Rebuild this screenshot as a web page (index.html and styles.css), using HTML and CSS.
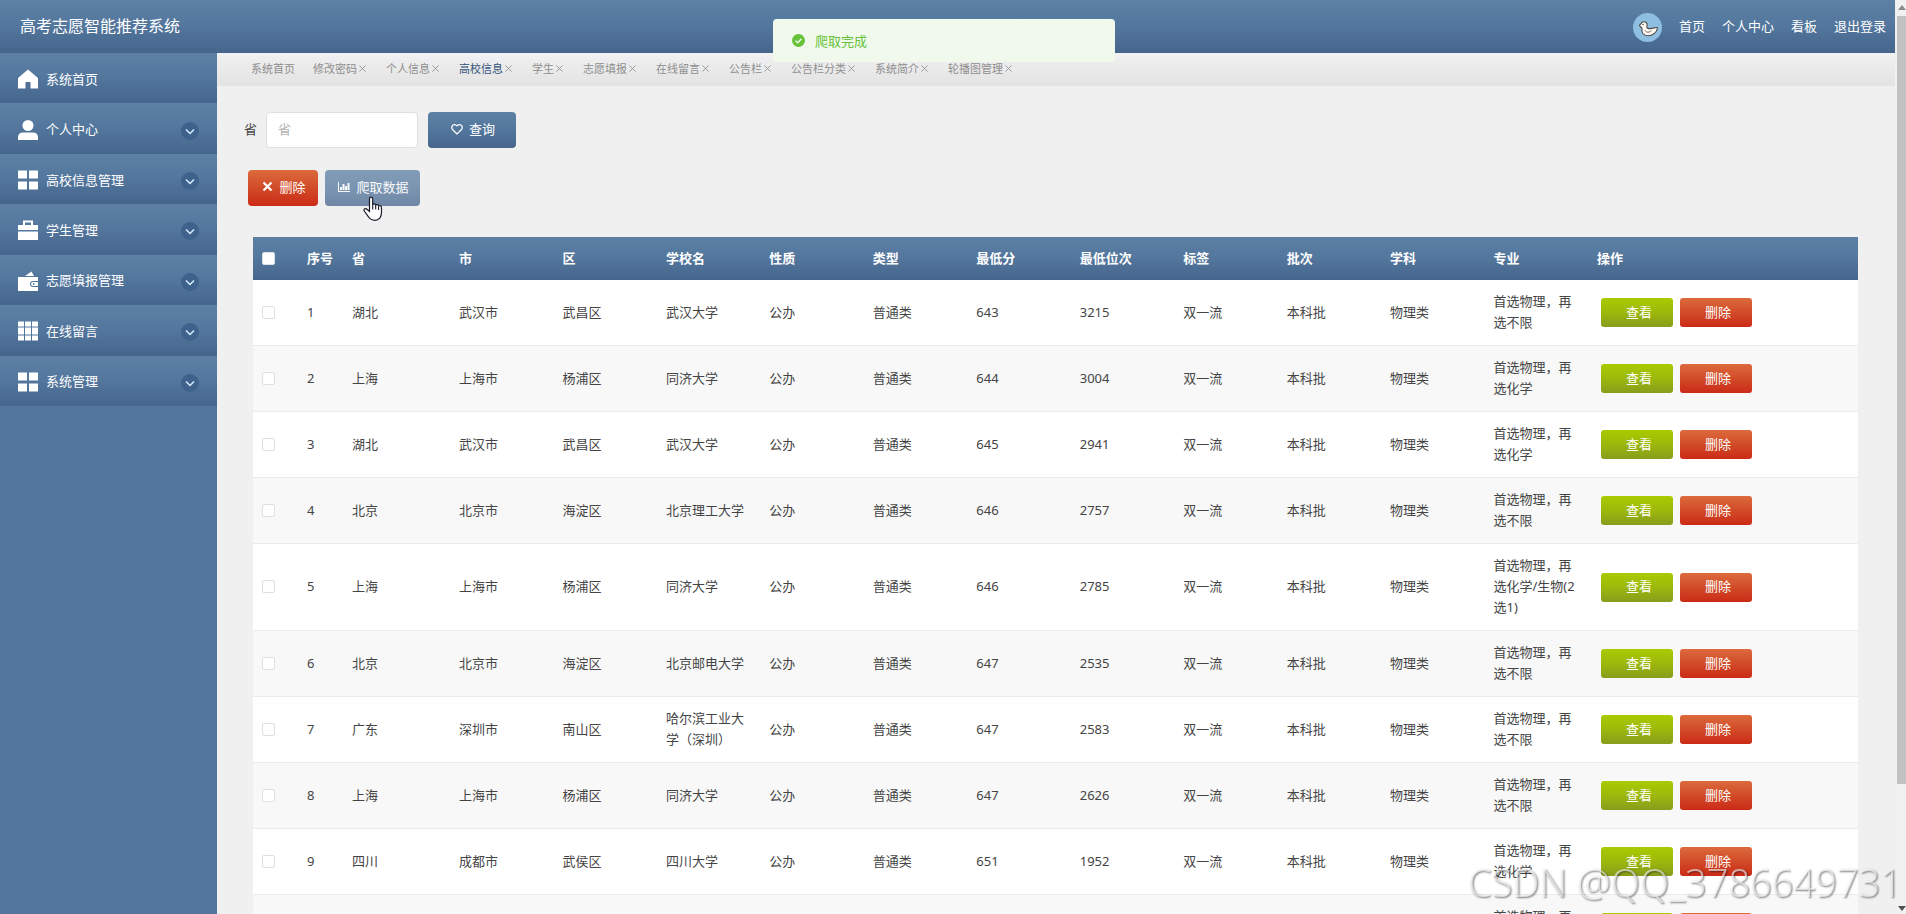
FILE: index.html
```
<!DOCTYPE html>
<html lang="zh-CN">
<head>
  <meta charset="UTF-8" />
  <meta name="viewport" content="width=device-width, initial-scale=1" />
  <title>高考志愿智能推荐系统</title>
  <link rel="stylesheet" href="styles.css">
</head>
<body>

  <div class="app">
    <!-- Header -->
    <header class="header">
      <h1 class="header-title">高考志愿智能推荐系统</h1>
      <nav class="header-nav">
        <svg class="avatar" viewBox="0 0 29 29" aria-hidden="true">
          <circle cx="14.500" cy="14.500" r="14.500" fill="#8fbfe0"/>
          <path d="M9 15.500c-.6-1.500-2.500-2-2.500-3 0-.8 1-.9 1.500-1.700.8-2.800 5.500-2.800 6 .3.300 1.800-.6 2.900.2 3.900 1.500 1.200 3.500.4 5.500.2 1.700-.2 2.600-1 4.800-.5-.4 4.300-4.700 8-9.500 8-4.600 0-7-3.500-6-7.200z" fill="#fff8f2" stroke="#4a4a4a" stroke-width="1.100"/>
          <path d="M12 17.500c1.500 2.500 4.500 2 6.500.2" fill="none" stroke="#6a5a50" stroke-width=".9"/>
          <circle cx="10" cy="11.500" r=".7" fill="#333"/>
        </svg>
        <a href="#">首页</a>
        <a href="#">个人中心</a>
        <a href="#">看板</a>
        <a href="#">退出登录</a>
      </nav>
    </header>

    <div class="body">
      <!-- Sidebar -->
      <aside class="sidebar">
        <nav class="menu">
          <a class="menu-item" href="#">
            <svg class="menu-icon" viewBox="0 0 20 20"><path d="M10 .5 0 9v10.500h7.500V13h5v6.500H20V9z"/></svg>
            <span>系统首页</span>
          </a>
          <a class="menu-item" href="#">
            <svg class="menu-icon" viewBox="0 0 20 20"><circle cx="10" cy="5.500" r="5.500"/><path d="M0 20v-3c0-3 2-4.500 5-4.500h10c3 0 5 1.500 5 4.500v3z"/></svg>
            <span>个人中心</span>
            <svg class="menu-arrow" viewBox="0 0 18 18"><circle cx="9" cy="9" r="9"/><path d="m5 7.500 4 4 4-4"/></svg>
          </a>
          <a class="menu-item" href="#">
            <svg class="menu-icon" viewBox="0 0 20 20"><path d="M0 .5h9v8H0zM11 .5h9v8h-9zM0 11.500h9v8H0zM11 11.500h9v8h-9z"/></svg>
            <span>高校信息管理</span>
            <svg class="menu-arrow" viewBox="0 0 18 18"><circle cx="9" cy="9" r="9"/><path d="m5 7.500 4 4 4-4"/></svg>
          </a>
          <a class="menu-item" href="#">
            <svg class="menu-icon" viewBox="0 0 20 20"><path fill-rule="evenodd" d="M5 5V.5h10V5h5v5H0V5zm2 0h6V2.500H7zM0 11.500h20V20H0z"/></svg>
            <span>学生管理</span>
            <svg class="menu-arrow" viewBox="0 0 18 18"><circle cx="9" cy="9" r="9"/><path d="m5 7.500 4 4 4-4"/></svg>
          </a>
          <a class="menu-item" href="#">
            <svg class="menu-icon" viewBox="0 0 20 20"><path d="M7 5l6.500-4.500L16 5zM0 6h20v4h-5a3 3 0 0 0 0 6h5v4H0z"/><path fill-rule="evenodd" d="M15 11h5v4h-5a2 2 0 0 1 0-4zm0 1.200v1.600h1.600v-1.600z"/></svg>
            <span>志愿填报管理</span>
            <svg class="menu-arrow" viewBox="0 0 18 18"><circle cx="9" cy="9" r="9"/><path d="m5 7.500 4 4 4-4"/></svg>
          </a>
          <a class="menu-item" href="#">
            <svg class="menu-icon" viewBox="0 0 20 20"><path d="M0 .5h6v5H0zM7 .5h6v5H7zM14 .5h6v5h-6zM0 6.500h6v7H0zM7 6.500h6v7H7zM14 6.500h6v7h-6zM0 14.500h6v5H0zM7 14.500h6v5H7zM14 14.500h6v5h-6z"/></svg>
            <span>在线留言</span>
            <svg class="menu-arrow" viewBox="0 0 18 18"><circle cx="9" cy="9" r="9"/><path d="m5 7.500 4 4 4-4"/></svg>
          </a>
          <a class="menu-item" href="#">
            <svg class="menu-icon" viewBox="0 0 20 20"><path d="M0 .5h9v8H0zM11 .5h9v8h-9zM0 11.500h9v8H0zM11 11.500h9v8h-9z"/></svg>
            <span>系统管理</span>
            <svg class="menu-arrow" viewBox="0 0 18 18"><circle cx="9" cy="9" r="9"/><path d="m5 7.500 4 4 4-4"/></svg>
          </a>
        </nav>
      </aside>

      <!-- Main -->
      <main class="main">
        <nav class="tabs" id="tabs"></nav>

        <div class="content">
          <form class="search" onsubmit="return false">
            <label class="search-label" for="province">省</label>
            <input class="search-input" type="text" id="province" placeholder="省">
            <button class="btn btn-blue btn-search" type="submit">
              <svg width="12" height="12" viewBox="0 0 12 12"><path d="M6 11 1.500 6.500C-.8 3.500 3.300-.5 6 2.800 8.700-.5 12.800 3.500 10.500 6.500z" fill="none" stroke="#fff" stroke-width="1.200"/></svg>
              查询
            </button>
          </form>

          <div class="actions">
            <button class="btn btn-red" type="button">
              <svg width="11" height="11" viewBox="0 0 11 11"><path d="M1.500 1.500l8 8M9.500 1.500l-8 8" stroke="#fff" stroke-width="2.200"/></svg>
              删除
            </button>
            <button class="btn btn-blue btn-crawl" type="button">
              <svg width="12" height="10" viewBox="0 0 12 10"><path d="M0 0h1v9h11v1H0zM2 5h2v3H2zM4.500 2h2v6h-2zM7 4h2v4H7zM9.500 1h2v7h-2z" fill="#fff"/></svg>
              爬取数据
            </button>
          </div>

          <table class="table">
            <colgroup>
              <col class="col-check">
              <col class="col-index">
              <col class="col-province">
              <col span="11">
              <col class="col-ops">
            </colgroup>
            <thead>
              <tr>
                <th><input type="checkbox" class="check" aria-label="全选"></th>
                <th>序号</th>
                <th>省</th>
                <th>市</th>
                <th>区</th>
                <th>学校名</th>
                <th>性质</th>
                <th>类型</th>
                <th>最低分</th>
                <th>最低位次</th>
                <th>标签</th>
                <th>批次</th>
                <th>学科</th>
                <th>专业</th>
                <th>操作</th>
              </tr>
            </thead>
            <tbody id="rows"></tbody>
          </table>
        </div>
      </main>
    </div>
  </div>

  <!-- Page scrollbar -->
  <div class="scrollbar">
    <span class="scroll-up"></span>
    <span class="scroll-thumb"></span>
    <span class="scroll-down"></span>
  </div>

  <!-- Message -->
  <div class="message" role="alert">
    <svg width="13" height="13" viewBox="0 0 13 13"><circle cx="6.500" cy="6.500" r="6.500" fill="#67c23a"/><path d="m3.500 6.700 2.200 2.100 3.800-4" fill="none" stroke="#f0f9eb" stroke-width="1.400"/></svg>
    <span>爬取完成</span>
  </div>

  <!-- Pointer -->
  <svg class="pointer" viewBox="0 0 20 26" aria-hidden="true">
    <path d="M6.500 15.500V2.800c0-2.300 3.200-2.300 3.200 0v6c.5-1.300 2.700-1.200 3 .4.700-1 2.600-.7 2.900.8.900-.8 2.900-.3 2.900 1.500v5.300c0 4-2.500 7.500-6.500 7.500-3 0-5-1-6.500-3.500L1.300 15c-1-2 1.200-3.200 2.700-1.700z" fill="#fff" stroke="#1a1a2a" stroke-width="1.200"/>
    <path d="M9.700 8.500v5M12.700 9.500v4M15.600 10.500v3.500" stroke="#1a1a2a" stroke-width="1.100"/>
  </svg>

  <div class="watermark">CSDN @QQ_3786649731</div>

  <script>
    const tabs = ['系统首页', '修改密码', '个人信息', '高校信息', '学生', '志愿填报', '在线留言', '公告栏', '公告栏分类', '系统简介', '轮播图管理'];

    // 省, 市, 区, 学校名, 最低分, 最低位次, 专业
    const schools = [
      ['湖北', '武汉市', '武昌区', '武汉大学', 643, 3215, '首选物理，再选不限'],
      ['上海', '上海市', '杨浦区', '同济大学', 644, 3004, '首选物理，再选化学'],
      ['湖北', '武汉市', '武昌区', '武汉大学', 645, 2941, '首选物理，再选化学'],
      ['北京', '北京市', '海淀区', '北京理工大学', 646, 2757, '首选物理，再选不限'],
      ['上海', '上海市', '杨浦区', '同济大学', 646, 2785, '首选物理，再选化学/生物(2选1)'],
      ['北京', '北京市', '海淀区', '北京邮电大学', 647, 2535, '首选物理，再选不限'],
      ['广东', '深圳市', '南山区', '哈尔滨工业大学（深圳）', 647, 2583, '首选物理，再选不限'],
      ['上海', '上海市', '杨浦区', '同济大学', 647, 2626, '首选物理，再选不限'],
      ['四川', '成都市', '武侯区', '四川大学', 651, 1952, '首选物理，再选化学'],
      ['四川', '成都市', '武侯区', '四川大学', 651, 1952, '首选物理，再选化学']
    ];

    document.getElementById('tabs').innerHTML = tabs.map((name, i) => `
      <span class="tab ${name === '高校信息' ? 'active' : ''}">
        <a href="#">${name}</a>${i > 0 ? `<button class="tab-close" type="button" aria-label="关闭${name}">
          <svg width="7" height="7" viewBox="0 0 8 8"><path d="M.5.5l7 7M7.500.5l-7 7"/></svg>
        </button>` : ''}
      </span>`).join('');

    document.getElementById('rows').innerHTML = schools.map((s, i) => `
      <tr>
        <td><input type="checkbox" class="check" aria-label="选择第${i + 1}行"></td>
        <td>${i + 1}</td>
        <td>${s[0]}</td>
        <td>${s[1]}</td>
        <td>${s[2]}</td>
        <td>${s[3]}</td>
        <td>公办</td>
        <td>普通类</td>
        <td>${s[4]}</td>
        <td>${s[5]}</td>
        <td>双一流</td>
        <td>本科批</td>
        <td>物理类</td>
        <td>${s[6]}</td>
        <td>
          <div class="ops">
            <button class="btn-row btn-green" type="button">查看</button>
            <button class="btn-row btn-red" type="button">删除</button>
          </div>
        </td>
      </tr>`).join('');
  </script>

</body>
</html>
```
FILE: styles.css
```
:root {
  --blue: linear-gradient(#5d81a4, #53769d 50%, #45658c);
  --red: linear-gradient(#dc6a3c, #d04826 55%, #cc2a17);
  --green: linear-gradient(#a9cb00, #9cb80c 50%, #879d1c);
  --side: #51759c;
  --bg: #f0f0f0;
}

* {
  box-sizing: border-box;
}

body {
  margin: 0;
  height: 100vh;
  overflow: hidden;
  background: var(--bg);
  color: #444;
  font-family: "Noto Sans", "Noto Sans CJK SC", sans-serif;
  font-size: 13px;
}

a {
  color: inherit;
  text-decoration: none;
}

button, input {
  font-family: inherit;
  font-size: 13px;
}

.app {
  display: flex;
  flex-direction: column;
  height: 100vh;
  margin-right: 11px;
}

/* header */
.header {
  display: flex;
  justify-content: space-between;
  align-items: center;
  flex: none;
  height: 53px;
  padding: 0 9px 2px 20px;
  background: var(--blue);
  color: #fff;
}

.header-title {
  margin: 0;
  font-size: 16px;
  font-weight: 400;
  line-height: 24px;
}

.header-nav {
  display: flex;
  align-items: center;
  gap: 17px;
}

.avatar {
  width: 29px;
  height: 29px;
  margin-top: 3px;
}

.body {
  display: flex;
  flex: 1;
  min-height: 0;
}

/* sidebar */
.sidebar {
  flex: none;
  width: 217px;
  background: var(--side);
}

.menu {
  display: flex;
  flex-direction: column;
  height: 353px;
}

.menu-item {
  display: flex;
  flex: 1;
  align-items: center;
  gap: 8px;
  padding: 0 18px;
  background: var(--blue);
  color: #fff;
}

.menu-icon {
  width: 20px;
  height: 20px;
  margin-top: 2px;
  fill: #fff;
}

.menu-arrow {
  width: 18px;
  height: 18px;
  margin-top: 4px;
  margin-left: auto;
}

.menu-arrow circle {
  fill: #3e628b;
}

.menu-arrow path {
  fill: none;
  stroke: #d8ecff;
  stroke-width: 1.5;
}

/* tabs */
.main {
  flex: 1;
  min-width: 0;
  overflow: hidden;
}

.tabs {
  display: flex;
  align-items: center;
  height: 33px;
  padding: 0 25px 4px;
  background: linear-gradient(#f0f1f4, #ebebeb 40%, #e3e3e3);
  color: #8e8e8e;
  font-size: 11px;
}

.tab {
  display: flex;
  align-items: center;
  padding: 0 9px;
}

.tab.active {
  color: #34527a;
}

.tab-close {
  display: flex;
  padding: 2px 2px 0;
  border: none;
  background: none;
  color: #909090;
  cursor: pointer;
}

.tab-close path {
  stroke: currentColor;
  stroke-width: 1;
}

.content {
  padding: 26px 37px 0 36px;
}

/* search */
.search {
  display: flex;
  align-items: center;
  margin-left: -9px;
}

.search-label {
  padding-bottom: 3px;
}

.search-input {
  width: 152px;
  height: 36px;
  margin: 0 10px 0 9px;
  padding: 0 11px 2px;
  border: 1px solid #dcdfe6;
  border-radius: 4px;
  background: #fff;
  color: #444;
}

.search-input::placeholder {
  color: #b4b4b4;
}

.btn {
  display: flex;
  align-items: center;
  justify-content: center;
  gap: 6px;
  height: 36px;
  padding: 0 10px 3px 12px;
  border: none;
  border-radius: 4px;
  color: #fff;
  white-space: nowrap;
  cursor: pointer;
}

.btn svg {
  flex: none;
}

.btn-search {
  width: 88px;
}

.btn-blue {
  background: var(--blue);
}

.btn-red {
  background: var(--red);
}

.btn-green {
  background: var(--green);
}

.actions {
  display: flex;
  gap: 7px;
  margin: 22px 0 31px -5px;
}

.actions .btn-red {
  width: 70px;
}

.btn-crawl {
  width: 95px;
  opacity: 0.75;
}

/* table */
.table {
  width: 100%;
  table-layout: fixed;
  border-collapse: separate;
  border-spacing: 0;
  line-height: 21px;
}

.col-check, .col-index {
  width: 45px;
}

.col-province {
  width: 107px;
}

.col-ops {
  width: 270px;
}

.table thead {
  background: var(--blue);
  color: #fff;
}

.table th {
  height: 43px;
  padding: 0 9px;
  font-weight: 700;
  text-align: left;
  white-space: nowrap;
}

.table td {
  padding: 11px 9px 12px;
  border-bottom: 1px solid #ebebeb;
  background: #fff;
  vertical-align: middle;
}

.table tbody tr:nth-child(even) td {
  background: #f8f8f8;
}

.check {
  display: block;
  appearance: none;
  width: 13px;
  height: 13px;
  margin: 0;
  border: 1px solid #dcdfe6;
  border-radius: 2px;
  background: #fff;
}

.ops {
  display: flex;
  gap: 7px;
  padding: 1px 0 0 4px;
}

.btn-row {
  width: 72px;
  height: 29px;
  padding: 0 0 3px 4px;
  border: none;
  border-radius: 3px;
  color: #fff;
  cursor: pointer;
}

/* overlays */
.scrollbar {
  position: fixed;
  top: 0;
  right: 0;
  bottom: 0;
  display: flex;
  flex-direction: column;
  align-items: flex-end;
  width: 10px;
  background: #f1f1f1;
}

.scroll-up, .scroll-down {
  flex: none;
  border: 4px solid transparent;
}

.scroll-up {
  height: 10px;
  margin-bottom: 6px;
  border-top-width: 5px;
  border-bottom: 5px solid #8a8a8a;
}

.scroll-thumb {
  width: 9px;
  height: 84%;
  background: #c1c1c1;
}

.scroll-down {
  margin-top: auto;
  margin-bottom: 3px;
  border-top: 5px solid #505050;
  border-bottom-width: 0;
}

.message {
  position: fixed;
  top: 19px;
  left: 50%;
  display: flex;
  align-items: center;
  gap: 10px;
  width: 342px;
  height: 43px;
  margin-left: -180px;
  padding: 0 19px;
  border-radius: 4px;
  background: #f0f9eb;
  color: #67c23a;
}

.pointer {
  position: fixed;
  top: 196px;
  left: 363px;
  width: 20px;
  height: 26px;
}

.watermark {
  position: fixed;
  right: 4px;
  bottom: 8px;
  color: rgba(255, 255, 255, 0.6);
  font-family: "Noto Sans", sans-serif;
  font-size: 38px;
  font-weight: 300;
  line-height: 48px;
  text-shadow: 1px 1px 2px rgba(0, 0, 0, 0.5);
}
```
